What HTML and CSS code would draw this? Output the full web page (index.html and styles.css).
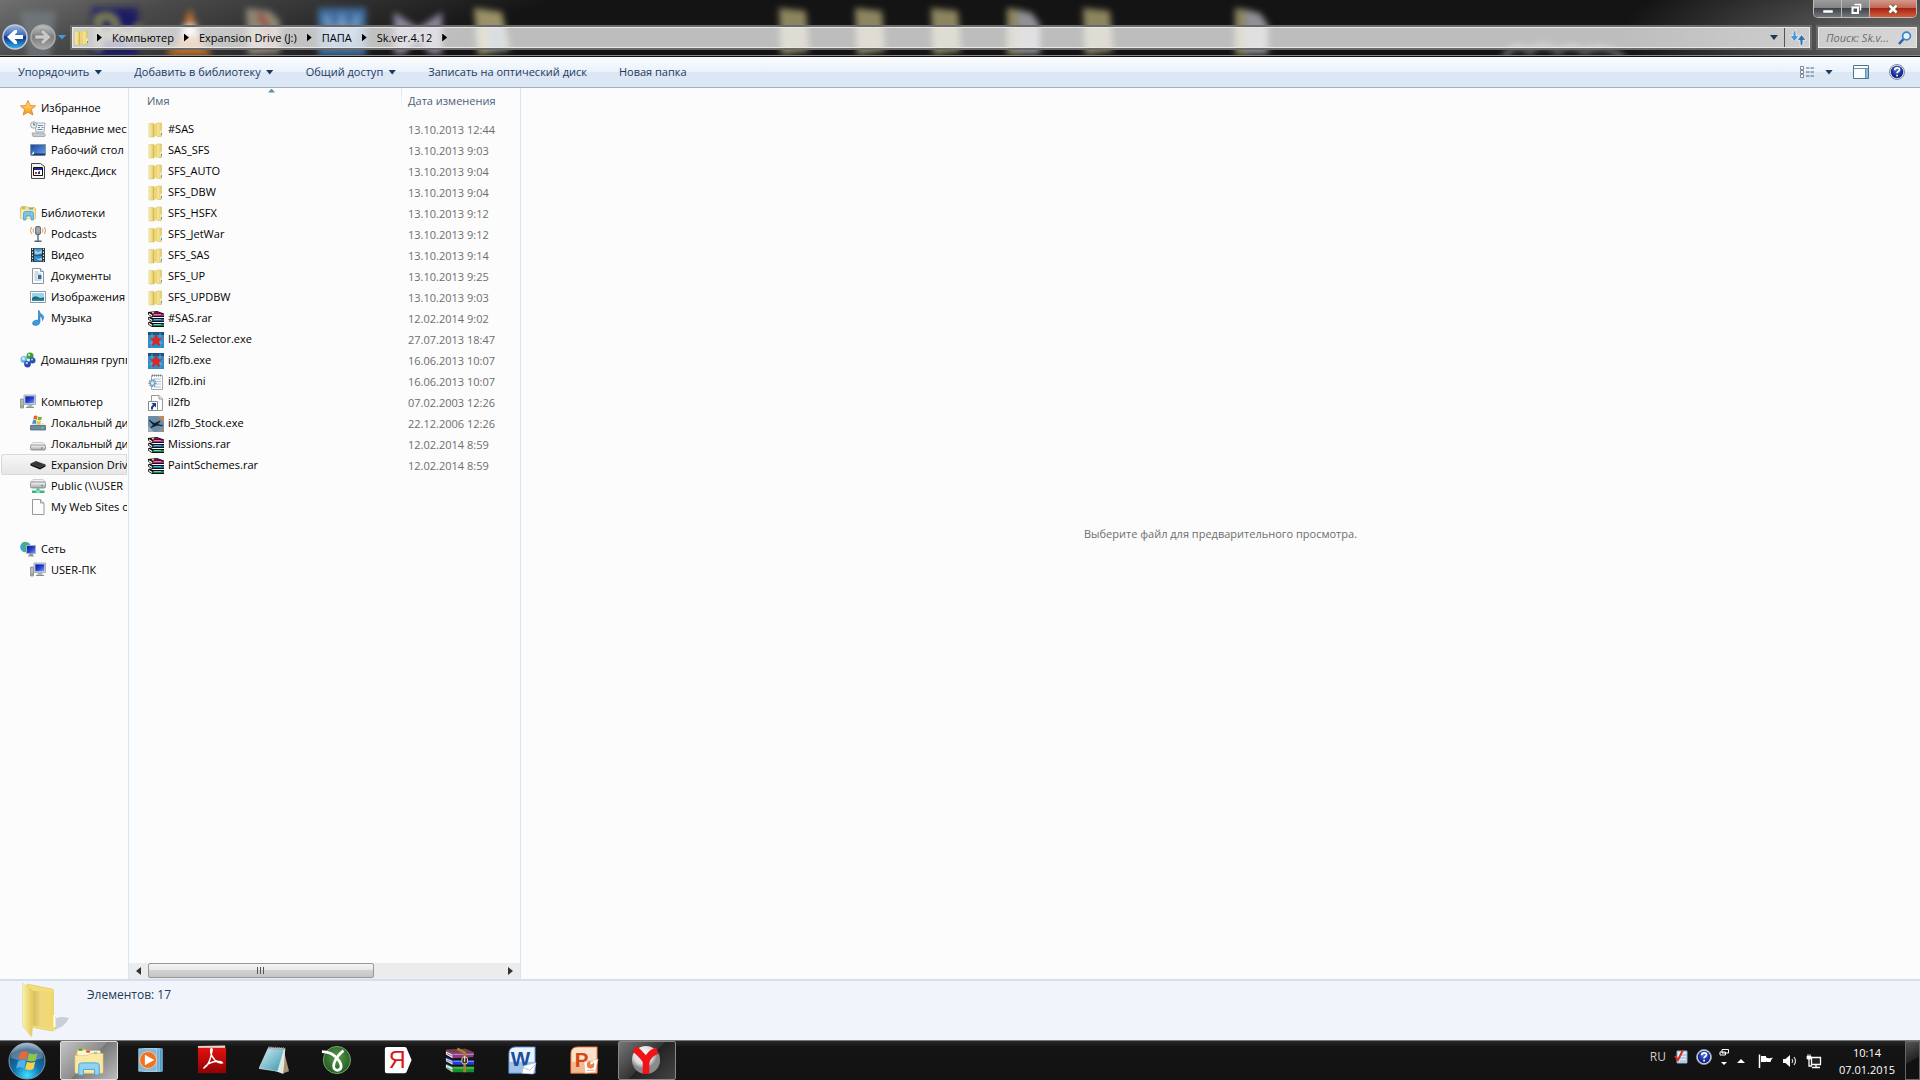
FILE: index.html
```html
<!DOCTYPE html>
<html lang="ru">
<head>
    <meta charset="UTF-8">
    <meta name="viewport" content="width=device-width, initial-scale=1.0">
    <title>Sk.ver.4.12</title>
    <link rel="stylesheet" href="styles.css">
</head>
<body>
    <!-- icon set -->
    <svg class="sprite" aria-hidden="true">
        <defs>
            <linearGradient id="gFolder" x1="0" x2="1"><stop offset="0" stop-color="#fbf3b4"/><stop offset="1" stop-color="#e2c656"/></linearGradient>
            <linearGradient id="gFolderDark" x1="0" x2="1"><stop offset="0" stop-color="#c9a94a"/><stop offset=".4" stop-color="#ecd681"/><stop offset="1" stop-color="#f0d565"/></linearGradient>
            <linearGradient id="gStar" x2="0" y2="1"><stop offset="0" stop-color="#ffe873"/><stop offset="1" stop-color="#f79420"/></linearGradient>
            <linearGradient id="gScreen" x2="1" y2="1"><stop offset="0" stop-color="#0a1a9c"/><stop offset=".5" stop-color="#2340d0"/><stop offset="1" stop-color="#7fa5ee"/></linearGradient>
            <linearGradient id="gDesk" x2="1" y2="1"><stop offset="0" stop-color="#16439c"/><stop offset="1" stop-color="#66a2ea"/></linearGradient>
            <linearGradient id="gDrive" x2="0" y2="1"><stop offset="0" stop-color="#f7f7f7"/><stop offset="1" stop-color="#a3a7aa"/></linearGradient>
            <linearGradient id="gBack" x2="0" y2="1"><stop offset="0" stop-color="#9db8e2"/><stop offset=".45" stop-color="#3566b6"/><stop offset=".5" stop-color="#0b3186"/><stop offset="1" stop-color="#35b6f3"/></linearGradient>
            <linearGradient id="gFwd" x2="0" y2="1"><stop offset="0" stop-color="#c2c2c2"/><stop offset=".5" stop-color="#7e7e7e"/><stop offset="1" stop-color="#a8a8a8"/></linearGradient>
            <radialGradient id="gHelp" cy=".35"><stop offset="0" stop-color="#5476dd"/><stop offset="1" stop-color="#10248c"/></radialGradient>
            <radialGradient id="gOrb" cy=".9" r=".95"><stop offset="0" stop-color="#3fe0ff"/><stop offset=".4" stop-color="#0f72b0"/><stop offset=".75" stop-color="#1d4c74"/><stop offset="1" stop-color="#b6cbd9"/></radialGradient>
            <radialGradient id="gBall" cx=".4" cy=".3"><stop offset="0" stop-color="#fff"/><stop offset=".7" stop-color="#dcdcdc"/><stop offset="1" stop-color="#8b8b8b"/></radialGradient>
            <radialGradient id="gGreen" cy=".4"><stop offset="0" stop-color="#5a9c4a"/><stop offset="1" stop-color="#28632a"/></radialGradient>
            <linearGradient id="gRed" x2="0" y2="1"><stop offset="0" stop-color="#e3120f"/><stop offset="1" stop-color="#8f0202"/></linearGradient>
            <linearGradient id="gPad" x2="1" y2="1"><stop offset="0" stop-color="#d8f2f5"/><stop offset="1" stop-color="#3494ab"/></linearGradient>
        </defs>
        <symbol id="folder" viewBox="0 0 16 16">
            <path d="M1 1.500h5v12.500l-1 1H1z" fill="url(#gFolder)" stroke="#dbc878" stroke-width=".6"/>
            <path d="M9 1h4.500v13.500H9z" fill="url(#gFolder)" stroke="#d8c069" stroke-width=".6"/>
            <path d="M5 2.500l4-1.500v12.500l-4 2z" fill="url(#gFolderDark)"/>
            <path d="M12.500 8.500h1v4h-1z" fill="#fff"/><path d="M13 11h1v2h-1z" fill="#4c9fb4"/>
        </symbol>
        <symbol id="star" viewBox="0 0 16 16"><path d="M8 .5l2.200 5 5.300.4-4.100 3.500 1.500 5.600L8 12.100 3.200 15l1.400-5.600L.5 5.900l5.300-.4z" fill="url(#gStar)" stroke="#e0832c" stroke-width=".9"/></symbol>
        <symbol id="recent" viewBox="0 0 16 16">
            <path d="M5 2h10l-1 9H6z" fill="#f3f6f8" stroke="#8f9ba3" stroke-width=".8"/><path d="M2 12h12l1.500 2.500-1 1H3z" fill="#c6ccd1" stroke="#8f979d" stroke-width=".7"/>
            <path d="M8 4.500h5M8 6.500h2m1.500 0h2M7.500 8.500h5" stroke="#5f8fae"/><circle cx="3.800" cy="4" r="3.200" fill="#e8f0f2" stroke="#9aa6aa"/><path d="M3.800 2v2h1.500" fill="none" stroke="#557"/>
        </symbol>
        <symbol id="desktop" viewBox="0 0 16 16"><path d="M.5 2.500h15v10.500H.5z" fill="url(#gDesk)" stroke="#8797aa"/><path d="M1 11.500h14v2H1z" fill="#1c3768"/><path d="M1 13l3-4v3z" fill="#dff"/></symbol>
        <symbol id="ydisk" viewBox="0 0 16 16"><path d="M1.500.5h9l4 3v12h-13z" fill="#f5f5f5" stroke="#444"/><path d="M3.500 4.500h9v8h-9z" fill="#fff" stroke="#111"/><path d="M4 5h8v2H4z" fill="#1d2b9a"/><path d="M5 9h2v2H5z" fill="#c22"/><path d="M8 9l2-1v3H8z" fill="#1d2b9a"/></symbol>
        <symbol id="library" viewBox="0 0 16 16">
            <path d="M.5 3l1-1.500h5l1 1h7l1 1v10h-15z" fill="#f3df8c" stroke="#d2b65d" stroke-width=".8"/><path d="M2 3h3" stroke="#55a84e"/><path d="M9 3.800h4" stroke="#4b8ec9"/>
            <path d="M.8 5.500h14.400v8H.8z" fill="#f9edae"/><path d="M3.500 8.500q0-2 2-2h6q2 0 2 2V15h-2.500v-4H6v4H3.500z" fill="#79c4ec" stroke="#3f94cb" stroke-width=".7"/>
        </symbol>
        <symbol id="podcast" viewBox="0 0 16 16"><rect x="5.500" y=".5" width="5" height="8" rx="1.500" fill="#7d8790" stroke="#4a525a" stroke-width=".8"/><path d="M5.500 3h5m-5 2h5M7.200 1v7M9 1v7" stroke="#cfd5da" stroke-width=".5"/><path d="M8 8.500V15M4.500 15.300h7" stroke="#566572" stroke-width="1.400"/><path d="M3.500 2.500q-1 2 0 4M1.500 1Q-.5 4.500 1.500 8M12.500 2.500q1 2 0 4M14.500 1q2 3.500 0 7" fill="none" stroke="#e29442"/></symbol>
        <symbol id="video" viewBox="0 0 16 16"><path d="M1 1h14v14H1z" fill="#27333d"/><path d="M4 1.500h8v6H4z" fill="#4a94cc"/><path d="M4 8.500h8v6H4z" fill="#3581bd"/><path d="M5 3l3 2 4-2v3L8 7.500H5zM5 10l3 2 4-1.500v3L8 13z" fill="#93cff0"/><path d="M2.500 1.500v13M13.500 1.500v13" stroke="#dfe6ea" stroke-dasharray="1.500 1.500"/></symbol>
        <symbol id="doc" viewBox="0 0 16 16"><path d="M2.500.5h8l3 3v12h-11z" fill="#fcfdfe" stroke="#8c959c"/><path d="M10.500.5v3h3" fill="#dde3e8" stroke="#8c959c"/><path d="M4.500 4h4m-4 2h7m-7 2h3m-3 2h3m-3 2h7" stroke="#8ba3bb" stroke-width=".8"/><path d="M8 7h3.500v4H8z" fill="#2d6fa5"/></symbol>
        <symbol id="picture" viewBox="0 0 16 16"><path d="M.5 2.500h15v11H.5z" fill="#fff" stroke="#8e9aa3"/><path d="M2 4h12v8H2z" fill="#97d2f2"/><path d="M2 9q3-3 6-1t6 0v4H2z" fill="#216d68"/><path d="M2 10.500h12V12H2z" fill="#2690bc"/></symbol>
        <symbol id="music" viewBox="0 0 16 16"><path d="M9 .5q.5 3 4 5 1.500 2-.5 5 .3-3.500-2.500-4.500V12q-.5 3-4 3.500-3.500 0-3.500-2.200T6 10.200q1.200-.3 2.500.3V.5z" fill="#3b9ce0" stroke="#1c6cae" stroke-width=".6"/></symbol>
        <symbol id="homegroup" viewBox="0 0 16 16"><circle cx="10" cy="4" r="3.500" fill="#3b9a3a"/><circle cx="4" cy="7.500" r="3.500" fill="#68bbe6"/><circle cx="12.500" cy="8.500" r="3" fill="#2651b5"/><circle cx="7.500" cy="12" r="3.400" fill="#2c48ad"/><circle cx="9" cy="3" r="1.300" fill="#b9e8a8"/><circle cx="3.500" cy="6.500" r="1.500" fill="#d7f2fd"/><circle cx="6.800" cy="11" r="1.300" fill="#a8c2f0"/><circle cx="12" cy="7.500" r="1.100" fill="#a8c2f0"/><circle cx="8.500" cy="8" r="1.500" fill="#e8f2ee"/></symbol>
        <symbol id="computer" viewBox="0 0 16 16"><path d="M.5 5h3v9h-3z" fill="#b5bbb7" stroke="#7b817d" stroke-width=".7"/><path d="M1 12h2" stroke="#3b3"/><path d="M4 1h11.500v9.500H4z" fill="#d9dde2" stroke="#9ba1aa" stroke-width=".8"/><path d="M5.300 2.300h9v7h-9z" fill="url(#gScreen)"/><path d="M8 10.500h4l1 3H7z" fill="#adb3b8"/><path d="M6 13.500h8" stroke="#888f95"/></symbol>
        <symbol id="sysdrive" viewBox="0 0 16 16"><path d="M2.500 8h11l2 3H.5z" fill="#dfe8ef"/><path d="M.5 10.500h15v4.500H.5z" fill="#6a8ba3" stroke="#50697b" stroke-width=".8"/><path d="M11 13h3" stroke="#70e05b"/><path d="M4 1q2-1 3.500.3l-.8 3.400q-2-1-3.500 0z" fill="#e8622a"/><path d="M8.200 1.500q2 1 3.800.2l-.8 3.300q-2 .7-3.700 0z" fill="#70b13a"/><path d="M3 5.500q2-1 3.500.2L5.700 9q-2-1-3.500 0z" fill="#388fd0"/><path d="M7.300 5.800q2 1 3.700.2l-.8 3.400q-2 .7-3.700 0z" fill="#f1c02d"/></symbol>
        <symbol id="drive" viewBox="0 0 16 16"><path d="M3 6.500h10l2.500 3H.5z" fill="#f4f4f4" stroke="#b1b3b5" stroke-width=".6"/><rect x=".5" y="9" width="15" height="5" rx="1.500" fill="url(#gDrive)" stroke="#7d8083" stroke-width=".8"/><path d="M11 12h2" stroke="#36a34a"/></symbol>
        <symbol id="usbdrive" viewBox="0 0 16 16"><path d="M.5 6.500L6 4l9.500 3.500-5.500 3z" fill="#383838"/><path d="M.5 6.500v2l9.500 4v-2zM10 10.500v2l5.500-3v-2z" fill="#111"/></symbol>
        <symbol id="netdrive" viewBox="0 0 16 16"><path d="M3 1.500h10l2.500 2.500H.5z" fill="#f4f4f4" stroke="#b1b3b5" stroke-width=".6"/><rect x=".5" y="4" width="15" height="6" rx="1.500" fill="url(#gDrive)" stroke="#7d8083" stroke-width=".8"/><path d="M11 7.500h2" stroke="#36a34a"/><path d="M6.500 10.500h3v2h5V15H2v-2.500h4.500z" fill="#39b680"/><path d="M6 12h4v3H6z" fill="#7fd9b0"/></symbol>
        <symbol id="page" viewBox="0 0 16 16"><path d="M2.500.5h8l3.500 3.500v11.500H2.500z" fill="#fcfcfc" stroke="#989898"/><path d="M10.500.5V4H14" fill="#e7e7e7" stroke="#989898"/></symbol>
        <symbol id="network" viewBox="0 0 16 16"><circle cx="5.500" cy="6" r="5.300" fill="#3aa4d8"/><path d="M2 2q3-2 5 0L6 5 3 6zM3 8l4-1v4q-3 .5-4-3z" fill="#52b35b"/><path d="M6.500 4.500h9v8h-9z" fill="url(#gScreen)" stroke="#a9b3c2"/><path d="M9.500 13h3v1.500h-3zM8 15h6" fill="#999" stroke="#8e959c"/></symbol>
        <symbol id="rar" viewBox="0 0 16 16">
            <path d="M0 1L9 0l7 2.500V6H4L0 3.500zM0 6.500l2-1L5 7h11v4H4L0 8.500zM0 11.500l2-1L5 12h11v4H4l-4-2.500z" fill="#111"/>
            <path d="M1.500 1.500L9 1l5.500 1.500H5z" fill="#8e1257"/><path d="M5 3.200h11V5H5z" fill="#c22583"/><path d="M5 8h11v2H5z" fill="#1b6bb4"/><path d="M5 13h11v2H5z" fill="#0d8a5e"/>
            <path d="M6 3.500h7" stroke="#f3abd8" stroke-width=".7"/><path d="M6 8.500h7" stroke="#8bc7ee" stroke-width=".7"/><path d="M6 13.500h7" stroke="#a0ebc5" stroke-width=".7"/>
            <path d="M.8 2.800l3.400 2M.8 7.500l3.400 2M.8 12.500l3.400 2" stroke="#fff" stroke-width="1.300"/><path d="M4 1.800l2-.3" stroke="#f5cb3a" stroke-width="1.400"/>
        </symbol>
        <symbol id="redstar" viewBox="0 0 16 16"><path d="M0 0h16v16H0z" fill="#2f8cc4"/><path d="M0 0h16v3H0z" fill="#1d547f"/><path d="M1 7h14M1 11h14M4 1v14M12 1v14" stroke="#66c0ea" stroke-width=".8"/><path d="M8 2l1.600 4.200 4.600.2-3.600 2.900 1.400 4.700L8 11.300 4 14l1.400-4.700-3.600-2.900 4.600-.2z" fill="#e8221d" stroke="#b3262e" stroke-width=".5"/></symbol>
        <symbol id="ini" viewBox="0 0 16 16"><path d="M3.500 1.500h11v14h-11z" fill="#fafcfd" stroke="#a2abb2"/><path d="M4 1.500h10" stroke="#727b82" stroke-width="2" stroke-dasharray="1 1"/><path d="M6 5h7M9 7.500h4M9 10h4M6 13h7" stroke="#adc1cf"/><circle cx="4.500" cy="9" r="3.200" fill="#dbeaf4" stroke="#6591b2" stroke-width="1.800" stroke-dasharray="1.400 .8"/><circle cx="4.500" cy="9" r="2.200" fill="#d9e7f0" stroke="#6591b2" stroke-width=".8"/></symbol>
        <symbol id="shortcut" viewBox="0 0 16 16"><path d="M3.500.5h7.500l3.500 3.500v11.500h-11z" fill="#fcfcfc" stroke="#989898"/><path d="M11 .5V4h3.500" fill="#e7e7e7" stroke="#989898"/><path d="M.5 6.500h9v9h-9z" fill="#fff" stroke="#8a8a8a"/><path d="M3.500 8H8v4.500L6.600 11 5 12.700 5 14.500H3V12l2-2.500z" fill="#173f8d"/></symbol>
        <symbol id="plane" viewBox="0 0 16 16"><path d="M0 0h16v16H0z" fill="#6b8ea8"/><path d="M9 0h7v6z" fill="#c18861"/><path d="M0 10l6 6H0z" fill="#9ab4c2"/><path d="M8 16l8-7v7z" fill="#8a9296"/><path d="M1 3.500l5 3.500 2-.5 4-2 .5 1L10 8l5 1.500v.8l-5.500-.8-3 1-3.500 1.500-.5-.8L5 9 1 4.500z" fill="#14222f"/></symbol>
        <symbol id="help" viewBox="0 0 16 16"><circle cx="8" cy="8" r="7.500" fill="#dfe4ee" stroke="#858c9c"/><circle cx="8" cy="8" r="6.200" fill="url(#gHelp)"/><path d="M5.700 6.300q0-2.500 2.500-2.500t2.300 2Q10.500 7 9 7.700q-.9.500-.9 1.600M8.100 10.700v1.800" fill="none" stroke="#fff" stroke-width="1.700"/></symbol>
        <symbol id="bigfolder" viewBox="0 0 48 56">
            <path d="M32 48q11-3 15-12-7-2-13 0z" fill="#8f96a5" opacity=".4"/>
            <path d="M5 2l25 5q1.500 0 1.500 2v24l2 1v13l-3 2-22-4z" fill="#f3dd78" stroke="#dfc35a" stroke-width=".6"/>
            <path d="M11 9l20 .5v37l-20-3z" fill="url(#gFolderDark)" opacity=".65"/>
            <path d="M31.500 33h2v12h-2z" fill="#fff"/><path d="M0 1l10 7q1.200 1 1.200 3v24l-1.500 20L0 43z" fill="url(#gFolder)" stroke="#e2cc6e" stroke-width=".6"/>
        </symbol>
        <symbol id="winflag" viewBox="0 0 24 24"><path d="M4 4q4-3 8-.5l-1.800 7.300q-4-2.300-8 .2z" fill="#ec6830"/><path d="M13 4.200q4 2 8.500 0l-1.900 7.200q-4 2-8.300 0z" fill="#91c548"/><path d="M2 12.300q4-2.300 8-.2l-1.900 7.300q-4-2.300-8 .2z" fill="#54b0e6"/><path d="M11 12.700q4 2 8.300 0L17.400 20q-4 2-8.300 0z" fill="#fbd046"/></symbol>
    </svg>

    <header class="titlebar">
        <!-- desktop icons that show through the glass -->
        <svg class="glass" aria-hidden="true">
            <defs><filter id="soft" x="-20%" y="-20%" width="140%" height="140%"><feGaussianBlur stdDeviation="3"/></filter></defs>
            <g filter="url(#soft)">
                <path d="M20 12h36l-6 48H28z" fill="#7c868c" opacity=".6"/>
                <path d="M92 8h46v50H92z" fill="#1a1a62"/><path d="M98 50V18q16-6 18 8t-14 8M122 30l8 10 10-14" fill="none" stroke="#8f9248" stroke-width="5"/>
                <path d="M190 8l14 40h-28z" fill="#c77832"/><path d="M184 26h12l3 9h-18z" fill="#eee"/><path d="M168 48h42v8h-42z" fill="#b86b24"/>
                <path d="M246 8l24 3 10 10v32l-32 2z" fill="#8f8674"/><path d="M258 14q10 8 12 34" stroke="#9f4640" stroke-width="6" fill="none"/>
                <path d="M318 8h48v48h-48z" fill="#3f6c9c"/><path d="M326 16l8 24 8-20 8 20 8-24" fill="none" stroke="#6f97c4" stroke-width="6"/>
                <path d="M394 12l24 16 24-16v42h-12L418 40l-14 14h-10z" fill="#8d849c"/>
                <path d="M474 8l28 4 8 38-32 5z" fill="#9a9168"/><path d="M490 28h14v22h-14z" fill="#6f8b9f"/>
                <g fill="#8c8560"><path d="M779 8l27 3 3 40-28 4z"/><path d="M855 8l27 3 3 40-28 4z"/><path d="M931 8l27 3 3 40-28 4z"/><path d="M1007 8l14 2v45h-14z"/><path d="M1083 8l27 3 3 40-28 4z"/><path d="M1235 8l14 2v45h-14z"/></g>
                <path d="M1018 10l14 3 8 12v29h-22zM1246 10l14 3 8 12v29h-22z" fill="#8f9196"/>
                <path d="M1504 58q10-18 26-6 12-12 28 0 12-10 26 0 20-10 40 6" fill="none" stroke="#777" stroke-width="5"/>
            </g>
        </svg>

        <nav class="history" aria-label="Переходы">
            <button type="button" aria-label="Назад"><svg viewBox="0 0 26 26"><circle cx="13" cy="13" r="12" fill="url(#gBack)" stroke="#c3cad8" stroke-width="1.500"/><path d="M5 13l7.500-7h2.500v2.500L12.500 11H21v4h-8.500l2.500 2.500V20h-2.500z" fill="#fff"/></svg></button>
            <button type="button" aria-label="Вперед"><svg viewBox="0 0 26 26"><circle cx="13" cy="13" r="12" fill="url(#gFwd)" stroke="#aaa" stroke-width="1.500"/><path d="M21 13l-7.500-7H11v2.500l2.500 2.500H5v4h8.500L11 17.500V20h2.500z" fill="#c9c9c9" stroke="#777" stroke-width=".6"/></svg></button>
            <button type="button" class="history-more" aria-label="Последние страницы"><svg viewBox="0 0 8 6"><path d="M0 1h8L4 5.500z" fill="#3d9be0"/></svg></button>
        </nav>

        <div class="address">
            <svg class="icon"><use href="#folder"/></svg>
            <ol class="crumbs">
                <li><a href="#">Компьютер</a></li>
                <li><a href="#">Expansion Drive (J:)</a></li>
                <li><a href="#">ПАПА</a></li>
                <li><a href="#">Sk.ver.4.12</a></li>
            </ol>
            <button type="button" class="address-drop" aria-label="Предыдущие расположения"><span class="caret"></span></button>
            <button type="button" class="refresh" aria-label="Обновить"><svg viewBox="0 0 16 16"><path d="M6 1Q3 1.500 3.700 6H.8l4 5 4-5H6.200Q6 3 6 1z" fill="#4796d2" stroke="#fff" stroke-width=".6"/><path d="M10 15q3-.5 2.300-5h2.900l-4-5-4 5h2.600q.2 3 .2 5z" fill="#2b6fae" stroke="#fff" stroke-width=".6"/></svg></button>
        </div>

        <form class="search">
            <input type="text" placeholder="Поиск: Sk.v..." aria-label="Поиск">
            <svg viewBox="0 0 14 14"><path d="M1 13l4.500-5" stroke="#2d5fae" stroke-width="2.500"/><circle cx="8.500" cy="5" r="3.900" fill="#e6f3fb" stroke="#3b83c8" stroke-width="1.700"/></svg>
        </form>

        <div class="window-buttons">
            <button type="button" aria-label="Свернуть"><svg viewBox="0 0 12 12"><path d="M1 7h10v3H1z" fill="#fff" stroke="#555" stroke-width=".5"/></svg></button>
            <button type="button" aria-label="Восстановить"><svg viewBox="0 0 12 12"><path d="M4.500 1.500h6v6" fill="none" stroke="#fff" stroke-width="1.500"/><path d="M2.500 4.500h5.500V10H2.500z" fill="#555" stroke="#fff" stroke-width="2"/></svg></button>
            <button type="button" class="close" aria-label="Закрыть"><svg viewBox="0 0 12 12"><path d="M2.500 2.500l7 7m0-7l-7 7" stroke="#553" stroke-width="4"/><path d="M2.500 2.500l7 7m0-7l-7 7" stroke="#fff" stroke-width="2.600"/></svg></button>
        </div>
    </header>

    <div class="toolbar">
        <button type="button">Упорядочить<span class="caret"></span></button>
        <button type="button">Добавить в библиотеку<span class="caret"></span></button>
        <button type="button">Общий доступ<span class="caret"></span></button>
        <button type="button">Записать на оптический диск</button>
        <button type="button">Новая папка</button>
        <div class="toolbar-right">
            <button type="button" aria-label="Изменить представление"><svg class="icon" viewBox="0 0 16 16"><path d="M1.500 2.500h3v3h-3zM1.500 6.500h3v3h-3zM1.500 10.500h3v3h-3z" fill="#fff" stroke="#7d8794"/><path d="M7 4h3.500m1 0H15M7 8h3.500m1 0H15M7 12h3.500m1 0H15" stroke="#4d6784"/></svg></button>
            <button type="button" aria-label="Дополнительно"><span class="caret"></span></button>
            <button type="button" aria-label="Область просмотра"><svg class="icon" viewBox="0 0 16 16"><path d="M.5 1.500h15v13H.5z" fill="#fafcff" stroke="#53708f"/><path d="M1 4.500h14M12.500 4.500V14" stroke="#7690ab"/><path d="M13 5h2v9h-2z" fill="#7dc3de"/></svg></button>
            <button type="button" aria-label="Справка"><svg class="icon"><use href="#help"/></svg></button>
        </div>
    </div>

    <main class="panes">
        <nav class="sidebar" aria-label="Область переходов">
            <section>
                <a class="group" href="#"><svg class="icon"><use href="#star"/></svg>Избранное</a>
                <a href="#"><svg class="icon"><use href="#recent"/></svg>Недавние места</a>
                <a href="#"><svg class="icon"><use href="#desktop"/></svg>Рабочий стол</a>
                <a href="#"><svg class="icon"><use href="#ydisk"/></svg>Яндекс.Диск</a>
            </section>
            <section>
                <a class="group" href="#"><svg class="icon"><use href="#library"/></svg>Библиотеки</a>
                <a href="#"><svg class="icon"><use href="#podcast"/></svg>Podcasts</a>
                <a href="#"><svg class="icon"><use href="#video"/></svg>Видео</a>
                <a href="#"><svg class="icon"><use href="#doc"/></svg>Документы</a>
                <a href="#"><svg class="icon"><use href="#picture"/></svg>Изображения</a>
                <a href="#"><svg class="icon"><use href="#music"/></svg>Музыка</a>
            </section>
            <section>
                <a class="group" href="#"><svg class="icon"><use href="#homegroup"/></svg>Домашняя группа</a>
            </section>
            <section>
                <a class="group" href="#"><svg class="icon"><use href="#computer"/></svg>Компьютер</a>
                <a href="#"><svg class="icon"><use href="#sysdrive"/></svg>Локальный диск</a>
                <a href="#"><svg class="icon"><use href="#drive"/></svg>Локальный диск</a>
                <a class="selected" href="#"><svg class="icon"><use href="#usbdrive"/></svg>Expansion Drive</a>
                <a href="#"><svg class="icon"><use href="#netdrive"/></svg>Public (\\USER</a>
                <a href="#"><svg class="icon"><use href="#page"/></svg>My Web Sites on</a>
            </section>
            <section>
                <a class="group" href="#"><svg class="icon"><use href="#network"/></svg>Сеть</a>
                <a href="#"><svg class="icon"><use href="#computer"/></svg>USER-ПК</a>
            </section>
        </nav>

        <section class="files">
            <table>
                <thead>
                    <tr><th class="name sorted">Имя</th><th>Дата изменения</th></tr>
                </thead>
                <tbody>
                    <tr><td><svg class="icon"><use href="#folder"/></svg>#SAS</td><td>13.10.2013 12:44</td></tr>
                    <tr><td><svg class="icon"><use href="#folder"/></svg>SAS_SFS</td><td>13.10.2013 9:03</td></tr>
                    <tr><td><svg class="icon"><use href="#folder"/></svg>SFS_AUTO</td><td>13.10.2013 9:04</td></tr>
                    <tr><td><svg class="icon"><use href="#folder"/></svg>SFS_DBW</td><td>13.10.2013 9:04</td></tr>
                    <tr><td><svg class="icon"><use href="#folder"/></svg>SFS_HSFX</td><td>13.10.2013 9:12</td></tr>
                    <tr><td><svg class="icon"><use href="#folder"/></svg>SFS_JetWar</td><td>13.10.2013 9:12</td></tr>
                    <tr><td><svg class="icon"><use href="#folder"/></svg>SFS_SAS</td><td>13.10.2013 9:14</td></tr>
                    <tr><td><svg class="icon"><use href="#folder"/></svg>SFS_UP</td><td>13.10.2013 9:25</td></tr>
                    <tr><td><svg class="icon"><use href="#folder"/></svg>SFS_UPDBW</td><td>13.10.2013 9:03</td></tr>
                    <tr><td><svg class="icon"><use href="#rar"/></svg>#SAS.rar</td><td>12.02.2014 9:02</td></tr>
                    <tr><td><svg class="icon"><use href="#redstar"/></svg>IL-2 Selector.exe</td><td>27.07.2013 18:47</td></tr>
                    <tr><td><svg class="icon"><use href="#redstar"/></svg>il2fb.exe</td><td>16.06.2013 10:07</td></tr>
                    <tr><td><svg class="icon"><use href="#ini"/></svg>il2fb.ini</td><td>16.06.2013 10:07</td></tr>
                    <tr><td><svg class="icon"><use href="#shortcut"/></svg>il2fb</td><td>07.02.2003 12:26</td></tr>
                    <tr><td><svg class="icon"><use href="#plane"/></svg>il2fb_Stock.exe</td><td>22.12.2006 12:26</td></tr>
                    <tr><td><svg class="icon"><use href="#rar"/></svg>Missions.rar</td><td>12.02.2014 8:59</td></tr>
                    <tr><td><svg class="icon"><use href="#rar"/></svg>PaintSchemes.rar</td><td>12.02.2014 8:59</td></tr>
                </tbody>
            </table>
            <div class="scrollbar">
                <button type="button" aria-label="Влево"><svg viewBox="0 0 5 8"><path d="M5 0v8L0 4z" fill="#333"/></svg></button>
                <div class="track"><div class="thumb"><span class="grip"></span></div></div>
                <button type="button" aria-label="Вправо"><svg viewBox="0 0 5 8"><path d="M0 0v8l5-4z" fill="#333"/></svg></button>
            </div>
        </section>

        <section class="preview">Выберите файл для предварительного просмотра.</section>
    </main>

    <footer class="details">
        <svg><use href="#bigfolder"/></svg>
        <p>Элементов: 17</p>
    </footer>

    <div class="taskbar">
        <button type="button" class="start" aria-label="Пуск"><svg viewBox="0 0 38 38"><circle cx="19" cy="19" r="18" fill="url(#gOrb)" stroke="#7e9db1"/><path d="M3 16a16 15 0 0 1 32 0q-16 6-32 0z" fill="#fff" opacity=".25"/><use href="#winflag" x="8" y="7" width="24" height="24"/></svg></button>
        <div class="apps">
            <button type="button" class="active" aria-label="Проводник"><svg viewBox="0 0 32 32"><path d="M2 8l2-5h8l2 2h14l1 24H2z" fill="#e9cf76" stroke="#b89b45" stroke-width=".6"/><path d="M4 5h24v7H4z" fill="#fbf6da"/><path d="M5 4h4" stroke="#2fa836" stroke-width="2"/><path d="M13 6h4" stroke="#d0452c" stroke-width="2"/><path d="M21 8h4" stroke="#2f88d8" stroke-width="2"/><path d="M1 10h14l2-2h14v20q0 1-1 1H2q-1 0-1-1z" fill="#f8e9a4" stroke="#dcbf66" stroke-width=".6"/><path d="M5 31V21q0-3 3-3h16q3 0 3 3v10h-5v-6H10v6z" fill="#8fd2f2" stroke="#4aa3d4"/></svg></button>
            <button type="button" aria-label="Медиаплеер"><svg viewBox="0 0 32 32"><path d="M10 4h19v24H10z" fill="#4e9ac8" stroke="#8fc6e6"/><path d="M8 4h18v24H8z" fill="#6bb0da" stroke="#b9def3" stroke-width=".6"/><path d="M4 4h19v24H4z" fill="#82b6d9" stroke="#b5d9ef" stroke-width=".8"/><circle cx="14" cy="16" r="9" fill="#ed7424" stroke="#ffc79a"/><path d="M10.500 10.500l10 5.500-10 5.500z" fill="#fff"/></svg></button>
            <button type="button" aria-label="Adobe Reader"><svg viewBox="0 0 32 32"><path d="M1 1l29-.5V4H1z" fill="#e6d4d2"/><path d="M1 3h30v27H1z" fill="url(#gRed)"/><path d="M7 25q7-4 9-19 1-2-1-2-2 5 4 12 4 4 8 3-1-2-8-1.500Q11 19 7 25z" fill="none" stroke="#fff" stroke-width="1.600"/></svg></button>
            <button type="button" aria-label="Блокнот"><svg viewBox="0 0 32 32"><path d="M26 4l6 24-6 2z" fill="#a69272"/><path d="M12 3l16 1-2 27-8-3z" fill="#e3e8df"/><path d="M10 3l17 1-7 24-20-3z" fill="url(#gPad)" stroke="#d5edf0" stroke-width=".7"/><path d="M10 3l18 1" stroke="#9b9b9b" stroke-width="3" stroke-dasharray="1.200 1"/></svg></button>
            <button type="button" aria-label="Программа"><svg viewBox="0 0 32 32"><circle cx="17" cy="16" r="14.500" fill="url(#gGreen)" stroke="#7fa66d"/><path d="M1 7q10 0 16 7 6 7 4 11-4 4-7 0-2-5 4-13 2-3 6-6" fill="none" stroke="#fff" stroke-width="3"/></svg></button>
            <button type="button" aria-label="Яндекс"><svg viewBox="0 0 32 32"><path d="M2 4q0-2 2-2h19q1 0 2 1l5.500 13L25 29q-1 1-2 1H4q-2 0-2-2z" fill="#fff"/><text x="6" y="25" class="ya">Я</text></svg></button>
            <button type="button" aria-label="WinRAR"><svg viewBox="0 0 32 32"><path d="M1 5l21-1 9 4-1 5-22 1-7-4z" fill="#8b3c82"/><path d="M1 5l21-1 9 4H9z" fill="#72443c"/><path d="M1 13l7 3h23v5H8l-7-3z" fill="#1d3ed0"/><path d="M1 20l7 3h23v6H8l-7-4z" fill="#159224"/><path d="M1 7l7 3v4l-7-4zM1 14l7 3v4l-7-4zM1 21l7 3v5l-7-5z" fill="#e8e8e8"/><path d="M2 9l6 3M2 16l6 3M2 24l6 3" stroke="#777"/><path d="M9 10h22M9 17.500h22M9 24.500h22" stroke="#fff" stroke-width=".8" opacity=".6"/><path d="M13 4l8 4v21" fill="none" stroke="#a87a38" stroke-width="3"/><rect x="18" y="13" width="6" height="7" rx="2" fill="#333" stroke="#e0d38c"/><path d="M21 12v6" stroke="#fff"/></svg></button>
            <button type="button" aria-label="Word"><svg viewBox="0 0 32 32"><path d="M2 9q0-7 7-7h21v28H2z" fill="#eaf2fc" stroke="#3d7ac5"/><path d="M2 18h28v12H2z" fill="#82afe0" opacity=".7"/><text x="4" y="22" class="office word">W</text><path d="M18 22l13-3-3 12-12-1z" fill="#fff" stroke="#a4bfdd" stroke-width=".6"/><path d="M18 24l6 3 6-6" fill="none" stroke="#a4bfdd"/></svg></button>
            <button type="button" aria-label="PowerPoint"><svg viewBox="0 0 32 32"><path d="M2 9q0-7 7-7h21v28H2z" fill="#fbe2cc" stroke="#d96427"/><path d="M2 18h28v12H2z" fill="#f0a26b" opacity=".6"/><text x="6" y="23" class="office ppt">P</text><path d="M16 18l15-3-3 14-11 1z" fill="#fff" stroke="#e5a987" stroke-width=".6"/><circle cx="23" cy="21" r="4" fill="#ea7d46"/><path d="M23 21v-4l4 2z" fill="#fff"/><path d="M19 27h8" stroke="#e9a47b"/></svg></button>
            <button type="button" class="running" aria-label="Яндекс.Браузер"><svg viewBox="0 0 32 32"><circle cx="16" cy="16" r="15" fill="url(#gBall)"/><path d="M4 4q8 7 12 13v14" fill="none" stroke="#f01216" stroke-width="7"/><path d="M16 18q3-9 12-12" fill="none" stroke="#f01216" stroke-width="7"/></svg></button>
        </div>

        <div class="tray">
            <div class="language">
                <span>RU</span>
                <button type="button" aria-label="Орфография"><svg viewBox="0 0 16 16"><path d="M4 2h10v12H4z" fill="#dcebf9" stroke="#86a9cb"/><path d="M7 6h6M7 9h6M7 12h6" stroke="#8fafd2"/><path d="M2 7l3 4 5-10" fill="none" stroke="#d92b1c" stroke-width="2"/></svg></button>
                <button type="button" aria-label="Справка"><svg viewBox="0 0 16 16"><use href="#help"/></svg></button>
                <button type="button" class="langbar" aria-label="Языковая панель"><svg viewBox="0 0 10 18"><path d="M3 1.500h6.500v3.500H3zM1 4h5.500v3H1z" fill="#111" stroke="#fff"/><path d="M2 14h6l-3 3z" fill="#fff"/></svg></button>
            </div>
            <button type="button" class="more" aria-label="Отображать скрытые значки"><svg viewBox="0 0 8 8"><path d="M0 6h8L4 2z" fill="#fff"/></svg></button>
            <button type="button" aria-label="Центр поддержки"><svg viewBox="0 0 16 16"><path d="M1.500 1.500V15" stroke="#fff" stroke-width="1.500"/><path d="M3 3h5v1.500q3 1.500 7 0-2 2-2 4-3 1-5 0V9H3z" fill="#fff"/></svg></button>
            <button type="button" aria-label="Громкость"><svg viewBox="0 0 16 16"><path d="M1 6h2.500L8 2v12l-4.500-4H1z" fill="#fff"/><path d="M10 6q1.500 2 0 4M12 4q3 4 0 8" fill="none" stroke="#ddd" stroke-width="1.200"/></svg></button>
            <button type="button" aria-label="Сеть"><svg viewBox="0 0 16 16"><path d="M5.500 4.500h9v7h-9z" fill="#222" stroke="#fff" stroke-width="1.300"/><path d="M6 14.500h8M10 12v2M3 6v7h3" fill="none" stroke="#fff" stroke-width="1.300"/><path d="M1 3h4v3H1zM2 1v2m2-2v2" fill="#fff" stroke="#fff" stroke-width=".7"/></svg></button>
            <time class="clock" datetime="2015-01-07T10:14">10:14<br>07.01.2015</time>
            <button type="button" class="show-desktop" aria-label="Свернуть все окна"></button>
        </div>
    </div>
</body>
</html>
```
FILE: styles.css
```css
* {
    box-sizing: border-box;
}

body {
    display: flex;
    flex-direction: column;
    height: 100vh;
    margin: 0;
    overflow: hidden;
    background: #fcfcfc;
    color: #000;
    font-family: "Open Sans", "Noto Sans", sans-serif;
    font-size: 11px;
    line-height: 16px;
}

button {
    display: flex;
    align-items: center;
    justify-content: center;
    margin: 0;
    padding: 0;
    border: none;
    background: none;
    color: inherit;
    font: inherit;
}

a {
    color: inherit;
    text-decoration: none;
}

.sprite {
    position: absolute;
    width: 0;
    height: 0;
}

.icon {
    flex: none;
    width: 16px;
    height: 16px;
}

.caret {
    width: 8px;
    height: 5px;
    background: #1e395b;
    clip-path: polygon(0 0, 100% 0, 50% 100%);
}

/* title bar */
.titlebar {
    position: relative;
    display: flex;
    flex: none;
    align-items: flex-end;
    gap: 4px;
    height: 57px;
    padding: 0 1px 6px;
    border-bottom: 1px solid #111;
    background:
        linear-gradient(160deg, #707070 0, #4a4a4a 60px, transparent 190px),
        radial-gradient(ellipse 300px 90px at 100% 70%, #707070, transparent),
        #141414;
    box-shadow: inset 0 -1px #8a8a8a;
}

.glass {
    position: absolute;
    inset: 0;
    width: 100%;
    height: 55px;
}

.history {
    position: relative;
    display: flex;
    align-items: center;
    gap: 2px;
    width: 65px;
    height: 26px;
    padding-left: 1px;
}

.history svg {
    width: 26px;
    height: 26px;
}

.history-more {
    width: 9px;
}

.history .history-more svg {
    width: 8px;
    height: 6px;
}

.address,
.search {
    position: relative;
    display: flex;
    align-items: center;
    height: 25px;
    border: 2px solid #6a6a6a;
    outline: 1px solid #e8e8e8;
    outline-offset: -3px;
    background: rgba(255, 255, 255, 0.72);
}

.address {
    flex: 1;
    padding-left: 2px;
}

.crumbs {
    display: flex;
    flex: 1;
    margin: 0;
    padding: 0;
    list-style: none;
}

.crumbs li {
    display: flex;
    align-items: center;
}

.crumbs li::before,
.crumbs li:last-child::after {
    content: "";
    width: 5px;
    height: 8px;
    margin: 0 10px;
    background: #000;
    clip-path: polygon(0 0, 100% 50%, 0 100%);
}

.crumbs li:first-child::before {
    margin-left: 7px;
}

.address-drop {
    width: 20px;
    height: 21px;
}

.refresh {
    width: 26px;
    height: 21px;
    border-left: 1px solid #555;
}

.refresh svg {
    width: 18px;
    height: 18px;
}

.search {
    width: 103px;
    padding: 0 5px 0 8px;
}

.search input {
    flex: 1;
    min-width: 0;
    padding: 0;
    border: none;
    outline: none;
    background: none;
    font: inherit;
    font-style: italic;
}

.search input::placeholder {
    color: #6d6d6d;
}

.search svg {
    width: 14px;
    height: 14px;
}

.window-buttons {
    position: absolute;
    top: 0;
    right: 3px;
    display: flex;
    height: 18px;
    border: 1px solid #bbb;
    border-top: none;
    border-radius: 0 0 5px 5px;
    overflow: hidden;
}

.window-buttons button {
    width: 28px;
    height: 17px;
    border-right: 1px solid #bbb;
    background: linear-gradient(#9b9b9b, #828282 50%, #3f4248 50%, #74777c);
}

.window-buttons .close {
    width: 46px;
    border-right: none;
    background: linear-gradient(#d39a8d, #c0614e 50%, #a52512 50%, #d55c3d);
}

.window-buttons svg {
    width: 12px;
    height: 12px;
}

/* command bar */
.toolbar {
    display: flex;
    flex: none;
    align-items: center;
    height: 31px;
    padding: 0 15px 0 2px;
    border-bottom: 1px solid #a0afc3;
    background: linear-gradient(#fdfeff, #e8f1fb 50%, #dce6f4 50%, #dde8f7);
    color: #1e395b;
}

.toolbar button {
    gap: 5px;
    padding: 0 16px;
}

.toolbar-right {
    display: flex;
    gap: 10px;
    margin-left: auto;
}

.toolbar-right button {
    padding: 0;
}

.toolbar-right button:nth-child(n + 3) {
    margin-left: 10px;
}

/* panes */
.panes {
    display: flex;
    flex: 1;
    min-height: 0;
}

.sidebar {
    flex: none;
    width: 129px;
    padding: 9px 1px 0 1px;
    border-right: 1px solid #d6e5f5;
    overflow: hidden;
}

.sidebar section {
    margin-bottom: 21px;
}

.sidebar a {
    display: flex;
    align-items: center;
    gap: 5px;
    height: 21px;
    padding-left: 29px;
    overflow: hidden;
    white-space: nowrap;
}

.sidebar .group {
    padding-left: 19px;
}

.sidebar .selected {
    border-radius: 3px 0 0 3px;
    background: linear-gradient(#f8f8f8, #e5e5e5);
    box-shadow: inset 0 0 0 1px #d9d9d9;
}

.files {
    display: flex;
    flex: none;
    flex-direction: column;
    justify-content: space-between;
    width: 392px;
    border-right: 1px solid #d6e5f5;
}

table {
    width: 100%;
    border-collapse: collapse;
    table-layout: fixed;
}

th {
    height: 31px;
    padding: 0 0 6px 6px;
    color: #4c607a;
    font-weight: normal;
    text-align: left;
}

.name {
    width: 273px;
    padding-left: 18px;
    background: linear-gradient(#d6e5f5, #fcfcfc) right top / 1px 24px no-repeat;
}

.sorted::before {
    content: "";
    display: block;
    width: 7px;
    height: 4px;
    margin: 0 0 -4px 121px;
    background: #5b92ab;
    clip-path: polygon(50% 0, 100% 100%, 0 100%);
    transform: translateY(-4px);
}

td {
    height: 21px;
    padding: 0 0 0 6px;
    color: #6d6d6d;
}

td:first-child {
    padding-left: 19px;
    color: #000;
}

td .icon {
    margin-right: 4px;
    vertical-align: middle;
}

.scrollbar {
    display: flex;
    height: 16px;
    background: #ececec;
}

.scrollbar button {
    width: 19px;
}

.scrollbar svg {
    width: 5px;
    height: 8px;
}

.track {
    flex: 1;
}

.thumb {
    display: flex;
    align-items: center;
    justify-content: center;
    width: 64%;
    height: 15px;
    border: 1px solid #979797;
    border-radius: 2px;
    background: linear-gradient(#f4f4f4, #e6e6e6 50%, #d2d2d2 50%, #c5c5c5);
}

.grip {
    width: 8px;
    height: 7px;
    background: repeating-linear-gradient(90deg, #555 0 1px, transparent 1px 3px);
}

.preview {
    display: flex;
    flex: 1;
    align-items: center;
    justify-content: center;
    color: #6d6d6d;
}

.details {
    display: flex;
    flex: none;
    gap: 17px;
    height: 61px;
    padding: 1px 22px;
    border-top: 2px solid #d3e0ee;
    background: #f1f5fb;
    color: #1e395b;
    font-size: 12px;
}

.details svg {
    width: 48px;
    height: 56px;
}

.details p {
    margin: 5px 0 0;
}

/* taskbar */
.taskbar {
    display: flex;
    flex: none;
    height: 40px;
    border-top: 1px solid #777;
    background: linear-gradient(#2a2a2a, #141414 6px, #121212);
    color: #fff;
}

.start {
    width: 54px;
}

.start svg {
    width: 38px;
    height: 38px;
}

.apps {
    display: flex;
    gap: 4px;
    margin-left: 6px;
}

.apps button {
    width: 58px;
    height: 39px;
    padding: 0 2px 2px 0;
}

.apps svg {
    width: 30px;
    height: 30px;
}

.apps .active {
    padding: 0;
    border: 1px solid #ddd;
    border-radius: 2px;
    background: linear-gradient(135deg, #c4c4c4, #8c8c8c 50%, #777 50%, #bbb);
}

.apps .running {
    border: 1px solid #888;
    border-radius: 2px;
    background: linear-gradient(135deg, #777, #333 50%, #222 50%, #444);
}

.ya {
    fill: #d8161b;
    font: 25px "Liberation Sans", sans-serif;
}

.office {
    font: bold 22px "Liberation Sans", sans-serif;
}

.word {
    fill: #1a4f9f;
}

.ppt {
    fill: #d14a13;
}

.tray {
    display: flex;
    align-items: center;
    gap: 8px;
    margin-left: auto;
}

.language {
    display: flex;
    align-items: center;
    gap: 7px;
    padding-bottom: 7px;
    color: #ccc;
    font-size: 12px;
}

.tray svg {
    width: 16px;
    height: 16px;
}

.tray .langbar svg {
    width: 10px;
    height: 18px;
}

.tray .more {
    margin-right: 5px;
}

.tray .more svg {
    width: 8px;
    height: 8px;
}

.clock {
    width: 60px;
    margin-left: 7px;
    line-height: 17px;
    text-align: center;
}

.show-desktop {
    width: 15px;
    height: 39px;
    border: 1px solid #666;
    background: linear-gradient(150deg, #555, #222 50%, #111 50%);
}
```
